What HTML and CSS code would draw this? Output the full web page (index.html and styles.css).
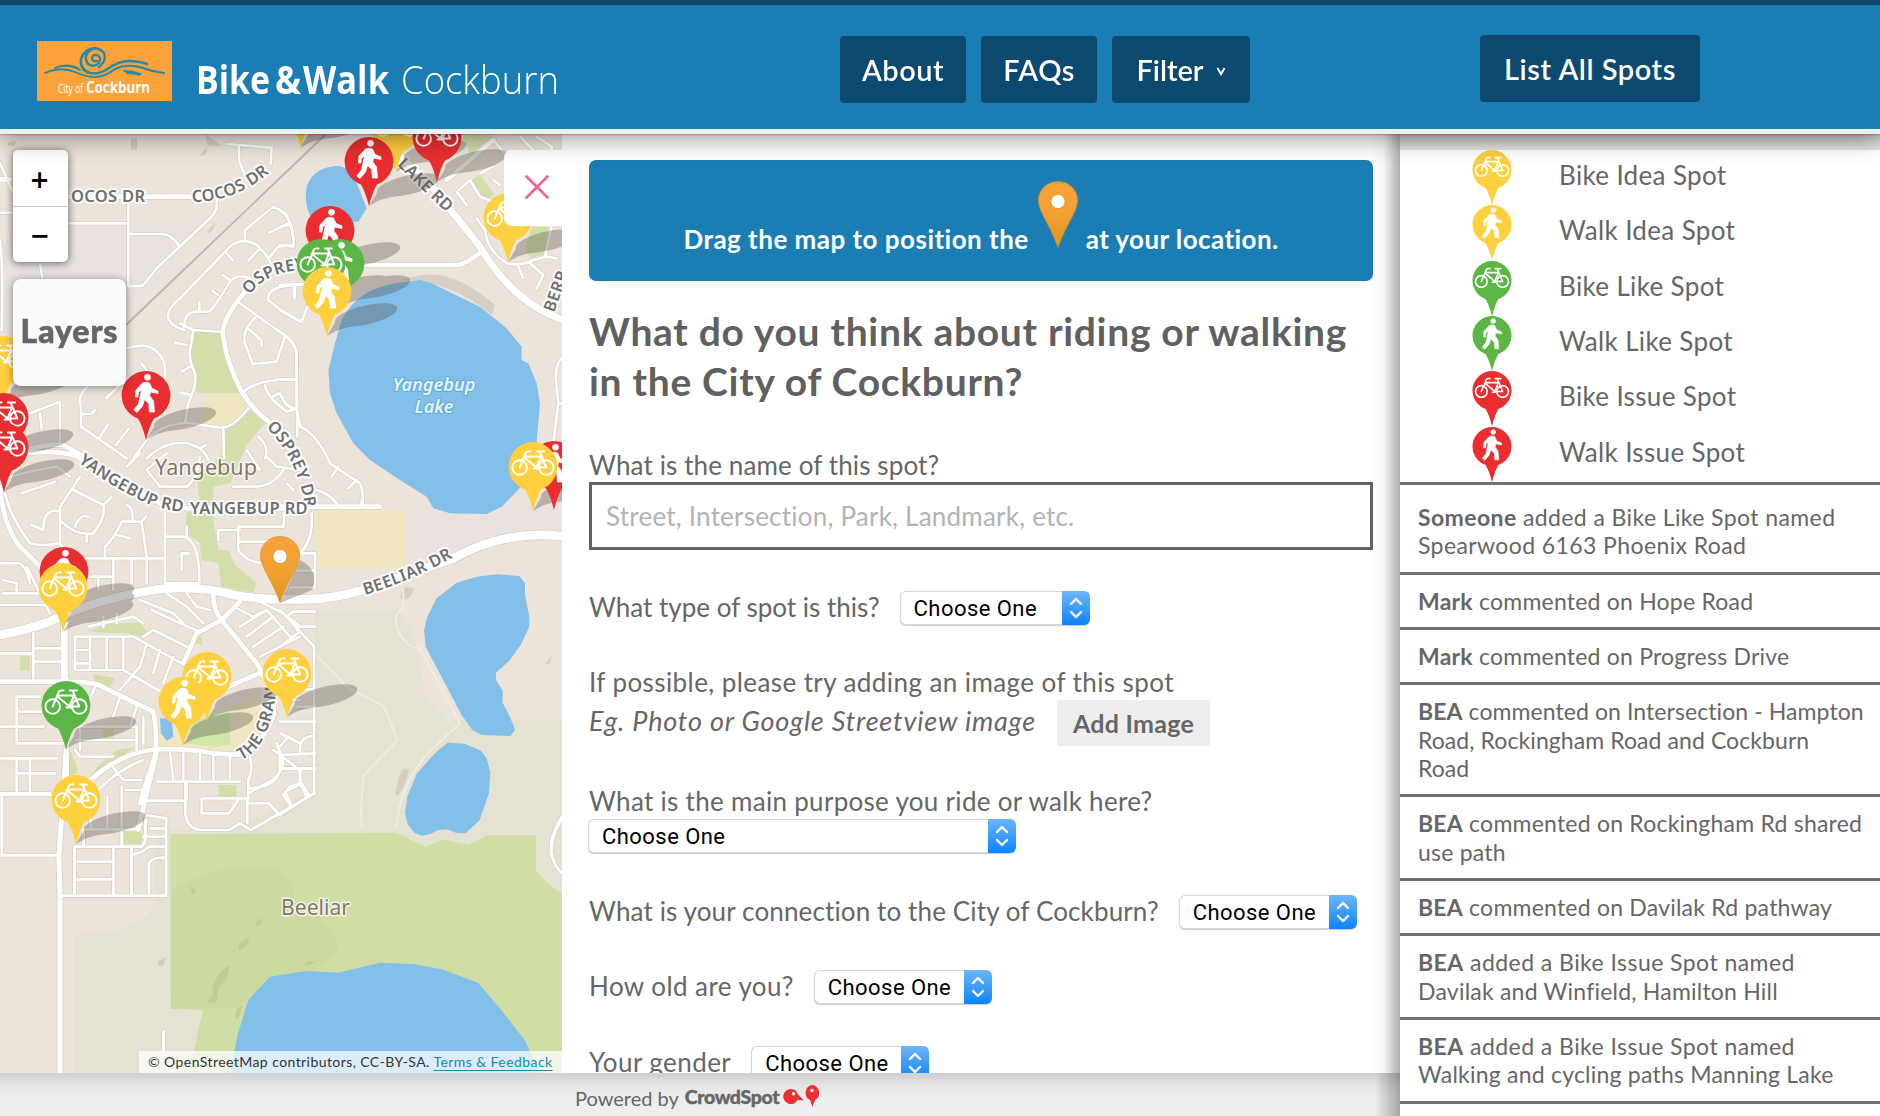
FILE: index.html
```html
<!DOCTYPE html>
<html lang="en">
<head>
<meta charset="utf-8">
<title>Bike&amp;Walk Cockburn</title>
<link rel="stylesheet" href="styles.css">
</head>
<body>
<svg class="defs" width="0" height="0" aria-hidden="true">
  <defs>
    <linearGradient id="orange" x1="0" y1="0" x2="0" y2="1"><stop offset="0" stop-color="#f9a43c"/><stop offset=".5" stop-color="#f3a033"/><stop offset="1" stop-color="#de9420"/></linearGradient>
    <path id="drop" d="M25 0A25 24.5 0 0 1 33 47.5Q28.5 55 25 69Q21.500 55 17 47.500A25 24.500 0 0 1 25 0Z"/>
    <g id="bike" fill="none" stroke="#fff" stroke-width="2" stroke-linecap="round" stroke-linejoin="round">
      <circle cx="11.700" cy="25.500" r="7.300"/><circle cx="38.300" cy="25.500" r="7.300"/>
      <path d="M11.700 25.500L18 10.500Q18.500 9 22.500 9.500M17 14.500H33M16.500 15.500L28.500 25.500L33 14.500M38.300 25.500L32 10.500M29 9.500H36M28.500 25.500H38M25.500 26.500H30"/>
    </g>
    <g id="walker" fill="#fff" stroke="#fff" stroke-width=".8" stroke-linejoin="round">
      <circle cx="26.500" cy="6.300" r="3"/>
      <path d="M21.500 12Q25 10.500 28.500 12L31 17.500L37 20V22.500L29.500 21L28.800 25L32.500 30L33.500 41H28.500L27.800 32.500L23.500 28.500L21.500 35L16 41.500L12.800 39L17.500 33L20.500 19L17.500 21L16.800 26H14.500L15 19Z"/>
    </g>
    <g id="shadow"><ellipse cx="39" cy="-21" rx="32" ry="9.500" transform="rotate(-13 39 -21)"/><path d="M0 0L12 -20L28 -10Q12 -8 0 0Z"/></g>
    <symbol id="spot-bike" viewBox="0 0 50 69"><use href="#drop"/><use href="#bike"/></symbol>
    <symbol id="spot-walk" viewBox="0 0 50 69"><use href="#drop"/><use href="#walker"/></symbol>
    <symbol id="drag-pin" viewBox="0 0 40 67"><path d="M20 .5C31 .5 39.500 9 39.500 19.500C39.500 31 28 43 20 66.500C12 43 .5 31 .5 19.500C.5 9 9 .5 20 .5Z" fill="url(#orange)" stroke="#d98f22" stroke-width=".8"/><circle cx="20" cy="20.500" r="7.200" fill="#fff" stroke="#e0942a"/></symbol>
  </defs>
</svg>

<header class="header">
  <div class="brand">
    <svg class="crest" viewBox="0 0 135 60" role="img" aria-label="City of Cockburn">
      <rect width="135" height="60" fill="#fba33a"/>
      <g fill="none" stroke="#2589a8" stroke-linecap="round">
        <path stroke-width="2.300" d="M60 20Q56 21 55 18Q55 13 60 14Q65 16 62 22Q57 27 51 23Q46 16 52 10Q60 4 67 12Q70 20 62 26"/>
        <path stroke-width="2.600" d="M58 7Q47 8 44 18Q43 29 53 32Q62 34 72 27Q82 20 92 20Q102 20 110 23"/>
        <path stroke-width="2.200" d="M58 36Q68 36 78 28Q90 22 106 27Q116 31 127 32"/>
        <path stroke-width="1.800" d="M8 32Q24 25 38 31Q46 35 56 36M18 27Q30 22 41 27M26 25Q34 24 43 29M87 30Q96 30 104 33M90 32Q98 32 102 34"/>
      </g>
      <text x="21" y="51.500" textLength="25" lengthAdjust="spacingAndGlyphs" class="crest-of">City of</text>
      <text x="49" y="51.500" textLength="64" lengthAdjust="spacingAndGlyphs" class="crest-name">Cockburn</text>
    </svg>
    <svg class="title" viewBox="0 0 370 60">
      <text x="0" y="44" textLength="74" lengthAdjust="spacingAndGlyphs" class="title-bold">Bike</text>
      <text x="79" y="44" textLength="26" lengthAdjust="spacingAndGlyphs" class="title-bold">&amp;</text>
      <text x="107" y="44" textLength="86" lengthAdjust="spacingAndGlyphs" class="title-bold">Walk</text>
      <text x="205" y="44" textLength="158" lengthAdjust="spacingAndGlyphs" class="title-light">Cockburn</text>
    </svg>
  </div>
  <nav class="nav">
    <a class="btn about">About</a>
    <a class="btn faqs">FAQs</a>
    <a class="btn filter">Filter <svg width="10" height="9" viewBox="0 0 10 9"><path d="M1.500 1L5 7L8.500 1" fill="none" stroke="#fff" stroke-width="2"/></svg></a>
  </nav>
  <a class="btn list-all">List All Spots</a>
</header>

<div class="main">
  <div class="left">
    <div class="stage">
      <div class="map">
        <svg class="tiles" viewBox="0 134 562 939" width="562" height="939">
          <defs>
            <path id="p-y1" d="M78 462Q110 486 146 503Q160 510 200 514"/>
            <path id="p-osp" d="M250 295Q265 271 310 269"/>
            <path id="p-osp2" d="M266 427Q310 470 307 548"/>
            <path id="p-cocos" d="M192 202Q240 202 278 165"/>
            <path id="p-bee" d="M365 595Q415 580 466 550"/>
            <path id="p-grange" d="M241 760Q278 745 279 650"/>
            <g id="roads">
              <g transform="translate(0 130) scale(.3333)">
                <path class="r1" d="M680 42L815 53L812 100M716 50L718 95L735 135M650 210V235Q645 250 630 265L470 415L430 465Q425 470 385 468M205 280H385M385 215V470M385 312H490Q515 315 535 345M0 100L40 190M0 248H40M120 400L128 450M0 330Q10 400 5 600M735 328V300L820 230L858 250Q880 300 882 345L835 350L805 385M865 280L808 308M555 600Q500 585 505 550Q510 530 540 505L690 350Q730 320 770 345Q800 370 812 400M680 370L698 390M780 355L745 392M552 590Q555 545 590 545H625Q640 540 690 455Q710 430 750 445M598 545V518M668 435L692 452M636 482L655 495M540 580L580 600L668 606M720 520L860 620Q890 640 890 680L892 920M900 465Q800 465 805 510Q850 550 900 575M885 470V505M768 560Q725 600 735 640L758 702L830 695L855 620M748 598L785 632V648M730 785Q780 745 885 748M795 765Q800 800 860 845L885 838M835 790L815 802M525 638L560 645M545 725L570 710M540 788L575 795M580 600L570 660Q565 690 585 730Q590 770 565 820L555 880M745 835Q700 895 660 893L560 878Q480 885 440 930L400 985M380 655Q440 635 470 665Q500 690 495 740V850M425 700L440 722M262 770Q230 800 243 830V890L380 985M245 852H275L285 840M318 805L360 765M298 925L325 882M348 945L385 897M90 850L180 815V940M120 850L125 895M440 985Q500 930 560 940Q610 950 625 990M600 955L618 945M670 900L672 985M775 920Q810 950 795 985"/>
                <path class="r2" d="M200 200H570Q620 195 650 190M0 148H30M740 480Q670 560 668 610Q680 700 725 785Q760 840 800 870L860 930M80 960Q150 940 190 945L260 985"/>
              </g>
              <g transform="translate(280 130) scale(.3333)">
                <path class="r1" d="M0 345L40 350Q45 300 20 260L0 240M0 290L25 285M560 225L530 185L565 155M640 30L690 90M720 20L760 60M770 20L815 50V80M600 130L640 110M570 150L600 200L640 215M640 150L660 165M590 265L615 300Q620 360 680 400Q720 410 760 390L800 380L830 385M815 290L795 380M715 410L730 445M750 400L790 435L770 475M0 465Q60 460 90 465M42 465V505M0 540L65 575L90 510M0 605Q50 640 50 680V840Q60 880 60 890Q110 910 150 1000L240 1060Q250 1080 248 1125M155 1040L175 1010M205 1075L230 1050M0 748H45M0 790Q20 840 50 835M850 680Q825 700 828 750L835 820L820 940M835 820H850M110 1080Q150 1090 175 1125M20 1060L40 1080"/>
                <path class="r2" d="M250 405H535Q560 400 605 365M500 150L640 30M0 1130H300"/>
                <path class="r3" d="M340 60L440 150L600 350Q700 520 850 570"/>
              </g>
              <g transform="translate(0 450) scale(.3333)">
                <path class="r1" d="M65 130L165 95M30 80Q100 60 170 50L210 80M240 80L180 170V280Q120 290 90 280Q30 200 15 130M180 280L210 325M220 120L310 165Q320 200 280 250Q230 260 185 215M335 140L310 165M265 200Q240 190 225 230M180 185Q130 170 130 240L95 225M260 255V275M315 320V290Q340 270 365 215H425L440 320M430 210L438 200M380 165Q400 170 398 210M350 255L390 265M210 325H495M495 170V400M495 260H550Q600 270 598 400H495M560 260V230M545 360V310H565M0 340H60Q85 360 90 400M10 390L50 400V430H10M50 430H140M0 465H150M80 350L150 490M270 380H340V325M395 325V400M295 380V420M340 380V420M440 330V400M100 550V690M0 610H100M100 595H185M100 635H185M225 560V660M225 560H370M270 565V660M320 565V660M225 600H270M225 640H270M225 660H370M265 530L400 500L430 520M310 500V530M350 490V520M370 660V560H400L545 640M370 660L500 735M440 580L420 650L360 720M480 600L460 670M520 620L490 700M430 560L460 540L560 590M455 480L540 520L600 545M420 450L520 490L560 530M500 430L560 470L610 520M560 430L590 470L630 480M720 530L800 480L870 560M740 560L820 500M760 590L850 530M780 620L900 560M700 470L760 500L800 480M780 455L850 490L900 530M655 270V240H720M715 230H850Q855 200 850 190M715 230V300Q740 340 800 340M715 275H850M50 740H120M50 740V880H200M0 830H130M50 785H125M0 925H170M50 925V1030M90 925V1030M0 1030H150M90 970H165M50 970H90M225 900L240 920H340M240 830V900M225 830H410V900M225 870H410M290 700L260 770M360 740L340 800M410 770L390 830M430 800V880M330 940L370 990H425M270 1050Q330 970 430 930M470 995H720M510 905L520 990M550 900V990M600 910V990M640 915V990M690 920V985M560 1000V1050M750 920Q760 960 745 990V1050M830 880L850 940Q840 980 800 1000L745 1030M440 60L500 10M440 60L480 110H560Q590 90 600 20M700 110H760Q820 110 850 60M740 0L780 60M800 20L830 50L900 60M380 50L420 10M500 750L560 700M840 850L900 880M820 900L900 960M850 750H900"/>
                <path class="r2" d="M0 110Q10 230 60 290L120 350L180 480M80 10Q200 -5 250 30L480 160L560 175H900M0 695H200Q280 695 310 712L460 785Q470 830 468 900M250 1010Q350 910 470 898Q560 895 640 910L720 915M470 900L420 1060M640 435Q640 480 665 510L590 550L550 640M665 510L770 640Q830 740 820 800Q790 880 720 915M665 510L720 455M640 730L800 660M200 690V1050"/>
                <path class="r3" d="M193 520V690"/>
                <path class="r4" d="M0 555Q80 540 150 515Q300 440 500 415Q620 410 700 435Q780 450 900 448Q990 450 1090 420L1360 325Q1520 235 1700 260"/>
              </g>
              <g transform="translate(280 500) scale(.3333)">
                <path class="r1" d="M95 40V80Q90 130 60 160H105V262H30M50 212H105M0 440L60 395M20 350L40 335H105M50 390L60 380H105M30 568H100M50 620H105M0 665H105M0 765L105 760M60 765V740Q65 710 100 708M0 740L25 710M0 805H105M60 805L62 850L30 860L10 885L30 915M62 855L80 890M850 950Q815 1000 815 1050M160 0L175 15M245 0V15"/>
                <path class="r1" d="M0 330L102 440V880L0 945"/>
              </g>
              <g transform="translate(0 750) scale(.3635 .3333)">
                <path class="r1" d="M0 316H165M5 135V316M5 135H140M205 435V290H390Q400 280 400 262V195L457 205V437H170M205 335H310M205 388H310M312 290V435M362 290V435M362 315Q390 310 410 290H455M410 435V340Q415 322 455 322M335 240V285M230 290V238H380M395 260H455M415 235H455M400 152H510M510 97V190Q515 240 560 240H630L660 220L690 240L865 130M555 145H680V220M555 145V190H630L655 150M685 115Q770 110 770 50V0M770 55H865M685 160H740L765 190M800 160L785 125L830 100L850 135M825 60V100M335 110V230M295 140V235M345 120H400M250 210V235M450 845V905M1546 200Q1510 260 1517 310Q1525 350 1546 370"/>
                <path class="r2" d="M165 970V430L162 320L182 0M432 0L380 238"/>
              </g>
            </g>
          </defs>
          <rect y="134" width="562" height="939" fill="#ece4da"/>
          <path fill="#eae2de" d="M30 225H200L120 330H0V240ZM410 505H562V535L410 560Z"/>
          <path fill="#e4e3d3" d="M315 611L400 611Q420 640 425 700L445 720H562V1073H75V935Q150 930 155 900V830H230L315 790Z"/>
          <g fill="#d4deab">
            <path transform="translate(0 130) scale(.3333)" d="M583 603L663 610Q668 690 718 790L590 788L590 745L567 690ZM672 905L750 840L795 880L740 945L715 990H672Z"/>
            <path transform="translate(280 130) scale(.3333)" d="M545 10H650L570 75ZM565 155L600 135L640 190L620 215ZM755 290H805L795 370L755 385L735 360Z"/>
            <path transform="translate(0 450) scale(.3333)" d="M680 0H735L690 100L640 110V210L655 300H685L705 345L770 400L760 428L665 410L655 340L605 330L600 280L558 250L560 190L600 160L590 85ZM262 545L330 520L420 518L445 550L430 562L380 550ZM280 672L345 685L330 710L280 690ZM585 580L600 548L608 585ZM60 618H90V662H60ZM210 900L235 960L205 990ZM290 950L350 900L410 890L330 940L270 985ZM655 1005H710V1050H655ZM310 830H340V865H310Z"/>
            <path transform="translate(0 750) scale(.3635 .3333)" d="M340 240H385L395 262L385 282H340Z"/>
          </g>
          <g fill="#f0e6c1">
            <path transform="translate(0 130) scale(.3333)" d="M620 790H718L748 832L690 893L600 885Z"/>
            <path d="M315 510H406V569H315Z"/>
            <path transform="translate(0 450) scale(.3333)" d="M560 830L790 720Q830 830 700 905L470 895V850Z"/>
          </g>
          <path fill="#cfe7a8" transform="translate(0 450) scale(.3333)" d="M570 815L690 780V885L640 890L560 880Z"/>
          <g transform="translate(0 750) scale(.3635 .3333)">
            <path fill="#d0dda4" d="M468 252L1090 248L1170 290L1220 268L1290 285L1340 256H1474V360Q1500 400 1546 430V970H520L558 780L470 776Z"/>
            <path fill="#cbdb9f" d="M470 420Q600 340 740 350Q810 370 810 450Q930 520 930 600Q880 680 740 680Q680 760 640 776L470 776Z"/>
            <path fill="#bfcd96" d="M632 645Q580 680 585 735L568 755Q590 770 600 745V715Q630 690 632 645ZM680 565Q650 580 657 600Q685 590 685 570ZM720 505Q700 515 703 530Q725 525 720 505ZM670 765Q640 780 650 805Q662 800 662 780ZM525 412H537V430L527 432ZM835 645L850 633L868 636L850 646Z"/>
          </g>
          <g fill="#bdb6ab" opacity=".45">
            <path d="M205 134L222 146H208ZM131 138H137V150H131ZM200 155L207 147V152L203 156ZM207 231L216 222L213 230L209 233ZM8 142L16 141L14 146H8ZM405 587L414 588Q411 600 402 600Q398 596 405 587ZM403 769L409 770Q406 785 398 796Q394 795 396 790Q398 777 403 769ZM546 663L552 655L550 663L547 665ZM158 961L166 957L163 966H158ZM422 275Q455 270 495 305L492 315Q450 280 400 280Z"/>
          </g>
          <g fill="#82bfe9">
            <path transform="translate(280 130) scale(.3333)" d="M345 460L420 450L455 460L600 530L680 595L725 650V690L745 700L770 760L780 820L770 940Q760 1040 700 1095L665 1130L620 1152L510 1150L460 1135L440 1100L360 1050L270 990L220 940L170 850L150 790L145 720L165 640L185 570Q230 480 345 460ZM80 170Q100 110 175 108Q220 115 230 160L260 235L235 275H100Q70 230 80 170Z"/>
            <path transform="translate(280 500) scale(.3333)" d="M470 295L530 248L590 230L650 223L718 228L735 250V285L748 350V380L722 435L690 480L648 518V540L668 572V608L690 650L705 690L692 708L605 705L577 690L545 645L437 440L432 390L442 350ZM503 728L555 731L603 752L620 775L631 818L627 880L598 962L556 1000L528 998L500 988L475 990L450 1003L425 1007L403 998L382 970L375 940L382 890L410 822L465 760Z"/>
            <path transform="translate(0 750) scale(.3635 .3333)" d="M632 970L655 850L683 750L743 680L840 663L930 668L1045 638L1140 643L1215 658L1315 698L1375 775L1445 872L1482 970Z"/>
            <path transform="translate(0 450) scale(.3333)" d="M480 805H515L520 860L500 872L483 850Z"/>
          </g>
          <g class="trails" transform="translate(280 500) scale(.3333)"><path d="M105 460L200 560L312 620L352 720L252 825Q240 900 245 980M370 265V325Q340 340 350 380Q370 440 420 445L540 670L450 755Q360 850 350 980"/></g>
          <path d="M126 325L325 135" stroke="#b9b5b0" stroke-width="1.800" fill="none"/>
          <use href="#roads" class="casing"/>
          <use href="#roads" class="surface"/>
          <g class="street">
            <text x="71" y="202">OCOS DR</text>
            <text><textPath href="#p-cocos">COCOS DR</textPath></text>
            <text><textPath href="#p-osp">OSPREY</textPath></text>
            <text><textPath href="#p-osp2">OSPREY DR</textPath></text>
            <text><textPath href="#p-y1">YANGEBUP RD</textPath></text>
            <text x="190" y="514">YANGEBUP RD</text>
            <text><textPath href="#p-bee">BEELIAR DR</textPath></text>
            <text><textPath href="#p-grange">THE GRANGE</textPath></text>
            <text transform="translate(397 165) rotate(44)">LAKE RD</text>
            <text transform="translate(554 313) rotate(-70)">BERR</text>
          </g>
          <g class="place"><text x="155" y="475" textLength="102" lengthAdjust="spacingAndGlyphs">Yangebup</text><text x="281" y="915" textLength="69" lengthAdjust="spacingAndGlyphs">Beeliar</text></g>
          <g class="water"><text x="434" y="391" textLength="83" lengthAdjust="spacingAndGlyphs">Yangebup</text><text x="434" y="413" textLength="39" lengthAdjust="spacingAndGlyphs">Lake</text></g>
          <g fill="#5a554f" opacity=".36">
            <use href="#shadow" x="146" y="440"/><use href="#shadow" x="3" y="405"/><use href="#shadow" x="3" y="462"/><use href="#shadow" x="4" y="492"/>
            <use href="#shadow" x="300" y="148"/><use href="#shadow" x="396" y="172"/><use href="#shadow" x="437" y="182"/><use href="#shadow" x="369" y="206"/>
            <use href="#shadow" x="330" y="275"/><use href="#shadow" x="340" y="308"/><use href="#shadow" x="320" y="308"/><use href="#shadow" x="327" y="336"/>
            <use href="#shadow" x="508" y="262"/><use href="#shadow" x="533" y="511"/>
            <use href="#shadow" x="64" y="616"/><use href="#shadow" x="64" y="624"/><use href="#shadow" x="63" y="632"/><use href="#shadow" x="66" y="749"/>
            <use href="#shadow" x="207" y="720"/><use href="#shadow" x="183" y="745"/><use href="#shadow" x="287" y="717"/><use href="#shadow" x="76" y="844"/>
            <path d="M280 603L300 560Q320 570 312 590Z"/>
          </g>
          <g class="spots">
            <use class="idea" href="#spot-bike" x="276" y="79" width="50" height="69"/>
            <use class="idea" href="#spot-bike" x="371" y="103" width="50" height="69"/>
            <use class="issue" href="#spot-bike" x="412" y="113" width="50" height="69"/>
            <use class="issue" href="#spot-walk" x="344" y="137" width="50" height="69"/>
            <use class="issue" href="#spot-walk" x="305" y="206" width="50" height="69"/>
            <use class="like" href="#spot-walk" x="315" y="239" width="50" height="69"/>
            <use class="like" href="#spot-bike" x="296" y="239" width="50" height="69"/>
            <use class="idea" href="#spot-walk" x="302" y="267" width="50" height="69"/>
            <use class="idea" href="#spot-bike" x="483" y="193" width="50" height="69"/>
            <use class="idea" href="#spot-bike" x="-22" y="336" width="50" height="69"/>
            <use class="issue" href="#spot-walk" x="121" y="371" width="50" height="69"/>
            <use class="issue" href="#spot-bike" x="-21" y="393" width="50" height="69"/>
            <use class="issue" href="#spot-bike" x="-21" y="423" width="50" height="69"/>
            <use class="issue" href="#spot-walk" x="529" y="441" width="50" height="69"/>
            <use class="idea" href="#spot-bike" x="508" y="442" width="50" height="69"/>
            <use class="issue" href="#spot-walk" x="39" y="547" width="50" height="69"/>
            <use class="idea" href="#spot-bike" x="38" y="563" width="50" height="69"/>
            <use class="like" href="#spot-bike" x="41" y="681" width="50" height="69"/>
            <use class="idea" href="#spot-bike" x="182" y="652" width="50" height="69"/>
            <use class="idea" href="#spot-walk" x="158" y="677" width="50" height="69"/>
            <use class="idea" href="#spot-bike" x="262" y="649" width="50" height="69"/>
            <use class="idea" href="#spot-bike" x="51" y="775" width="50" height="69"/>
            <use href="#drag-pin" x="260" y="536" width="40" height="67"/>
          </g>
        </svg>
        <div class="zoom"><a>+</a><a>−</a></div>
        <div class="layers">Layers</div>
        <div class="attribution"><span class="copy">©</span> OpenStreetMap contributors, CC-BY-SA. <a>Terms &amp; Feedback</a></div>
        <a class="close" aria-label="Close"><svg width="24" height="24" viewBox="0 0 24 24"><path d="M1.500 1.500L22.500 22.500M22.500 1.500L1.500 22.500" stroke="#f0619a" stroke-width="2.600" stroke-linecap="round"/></svg></a>
      </div>
      <form class="form">
        <div class="banner"><span class="drag-text">Drag the map to position the</span><svg width="42" height="68"><use href="#drag-pin" width="42" height="67"/></svg><span class="loc-text">at your location.</span></div>
        <h1>What do you think about riding or walking<br>in the City of Cockburn?</h1>
        <label class="stacked name-label">What is the name of this spot?</label>
        <input type="text" placeholder="Street, Intersection, Park, Landmark, etc.">
        <div class="row type-row"><label>What type of spot is this?</label><span class="select w190"><select><option>Choose One</option></select><svg width="28" height="34" viewBox="0 0 28 34"><path d="M9 13L14 8L19 13M9 21L14 26L19 21"/></svg></span></div>
        <label class="stacked image-label">If possible, please try adding an image of this spot</label>
        <div class="image-row"><em>Eg. Photo or Google Streetview image</em><button type="button">Add Image</button></div>
        <label class="stacked purpose-label">What is the main purpose you ride or walk here?</label>
        <span class="select w428"><select><option>Choose One</option></select><svg width="28" height="34" viewBox="0 0 28 34"><path d="M9 13L14 8L19 13M9 21L14 26L19 21"/></svg></span>
        <div class="row connection-row"><label>What is your connection to the City of Cockburn?</label><span class="select"><select><option>Choose One</option></select><svg width="28" height="34" viewBox="0 0 28 34"><path d="M9 13L14 8L19 13M9 21L14 26L19 21"/></svg></span></div>
        <div class="row short-row"><label>How old are you?</label><span class="select"><select><option>Choose One</option></select><svg width="28" height="34" viewBox="0 0 28 34"><path d="M9 13L14 8L19 13M9 21L14 26L19 21"/></svg></span></div>
        <div class="row short-row"><label>Your gender</label><span class="select"><select><option>Choose One</option></select><svg width="28" height="34" viewBox="0 0 28 34"><path d="M9 13L14 8L19 13M9 21L14 26L19 21"/></svg></span></div>
      </form>
    </div>
    <footer class="footer"><span>Powered by</span><b>CrowdSpot</b>
      <svg width="38" height="24" viewBox="0 0 38 24"><g fill="#ee3035"><path d="M8 4A7.500 7.500 0 0 1 15 9.500L21 15.500L14.500 14.800A7.500 7.500 0 1 1 8 4Z"/><path d="M29 0A8 8 0 0 1 32 15L29.500 22L27 15A8 8 0 0 1 29 0Z"/></g><circle cx="10.500" cy="8.700" r="1.700" fill="#fff"/><circle cx="29" cy="5.500" r="1.700" fill="#fff"/></svg>
    </footer>
  </div>
  <aside class="sidebar">
    <ul class="legend">
      <li><svg class="idea"><use href="#spot-bike"/></svg>Bike Idea Spot</li>
      <li><svg class="idea"><use href="#spot-walk"/></svg>Walk Idea Spot</li>
      <li><svg class="like"><use href="#spot-bike"/></svg>Bike Like Spot</li>
      <li><svg class="like"><use href="#spot-walk"/></svg>Walk Like Spot</li>
      <li><svg class="issue"><use href="#spot-bike"/></svg>Bike Issue Spot</li>
      <li><svg class="issue"><use href="#spot-walk"/></svg>Walk Issue Spot</li>
    </ul>
    <ul class="feed">
      <li><b>Someone</b> added a Bike Like Spot named<br>Spearwood 6163 Phoenix Road</li>
      <li><b>Mark</b> commented on Hope Road</li>
      <li><b>Mark</b> commented on Progress Drive</li>
      <li class="tight"><b>BEA</b> commented on Intersection - Hampton<br>Road, Rockingham Road and Cockburn<br>Road</li>
      <li><b>BEA</b> commented on Rockingham Rd shared<br>use path</li>
      <li><b>BEA</b> commented on Davilak Rd pathway</li>
      <li class="loose"><b>BEA</b> added a Bike Issue Spot named<br><span>Davilak and Winfield, Hamilton Hill</span></li>
      <li class="loose"><b>BEA</b> added a Bike Issue Spot named<br><span>Walking and cycling paths Manning Lake</span></li>
      <li></li>
    </ul>
  </aside>
</div>
</body>
</html>
```
FILE: styles.css
```css
* { box-sizing: border-box; }
body {
  margin: 0;
  width: 1880px;
  height: 1116px;
  overflow: hidden;
  display: flex;
  flex-direction: column;
  background: #fff;
  font-family: Lato, "Liberation Sans", sans-serif;
  color: #666;
}
.defs { position: absolute; }
ul { margin: 0; padding: 0; list-style: none; }

/* Header */
.header {
  position: relative;
  z-index: 3;
  flex: none;
  height: 134px;
  display: grid;
  grid-template-columns: 840px 640px 1fr;
  align-items: start;
  background: #1a7db4;
  border-top: 5px solid #0b4a6e;
  border-bottom: 5px solid #efefef;
  box-shadow: 0 1px 1px rgba(0, 0, 0, .2), 0 3px 24px rgba(0, 0, 0, .45);
}
.brand { display: flex; padding: 36px 0 0 37px; }
.crest { width: 135px; height: 60px; }
.title { width: 370px; height: 60px; margin: 9px 0 0 24px; overflow: visible; }
.crest text, .title text { fill: #fff; font-family: "Open Sans", sans-serif; }
.crest-of { font-size: 12px; }
.crest-name { font-size: 16px; font-weight: 700; }
.title-bold { font-size: 38.500px; font-weight: 700; }
.title-light { font-size: 38.500px; font-weight: 300; }
.nav { display: flex; gap: 15px; padding-top: 31px; }
.btn {
  display: flex;
  align-items: center;
  justify-content: center;
  height: 67px;
  padding-bottom: 1px;
  border-radius: 4px;
  background: #0b4a6e;
  color: #fff;
  font-size: 29px;
  font-weight: 600;
  letter-spacing: .45px;
}
.about { width: 126px; }
.faqs { width: 116px; }
.filter { width: 138px; letter-spacing: 0; }
.filter svg { margin: 5px 0 0 12px; }
.list-all { width: 220px; margin-top: 30px; letter-spacing: .55px; }

/* Columns */
.main { flex: 1; display: flex; min-height: 0; }
.left { width: 1400px; display: flex; flex-direction: column; }
.stage { flex: 1; min-height: 0; display: flex; overflow: hidden; }

/* Map */
.map { position: relative; width: 562px; height: 939px; overflow: hidden; }
.tiles { display: block; }
.casing { --c: 4px; fill: none; stroke: #d5cec5; stroke-linecap: round; stroke-linejoin: round; }
.surface { --c: 0px; fill: none; stroke: #fff; stroke-linecap: round; stroke-linejoin: round; }
.r1 { stroke-width: calc(8px + var(--c)); }
.r2 { stroke-width: calc(14px + var(--c)); }
.r3 { stroke-width: calc(21px + var(--c)); }
.r4 { stroke-width: calc(26px + var(--c)); }
.trails { fill: none; stroke: #f1ecdf; stroke-width: 6; }
.tiles text { font-family: "Noto Sans", sans-serif; paint-order: stroke; stroke-linejoin: round; }
.street text { font-size: 16.500px; font-weight: 600; letter-spacing: .3px; fill: #6d6e70; stroke: rgba(255, 255, 255, .85); stroke-width: 4px; }
.place text { font-size: 22px; fill: #85766b; stroke: rgba(255, 255, 255, .75); stroke-width: 3px; }
.water text { font-size: 18px; font-style: italic; font-weight: 600; text-anchor: middle; fill: #e3f2fc; stroke: #63aadb; stroke-width: 2px; }
.idea { fill: #fed03d; }
.like { fill: #5cb645; }
.issue { fill: #e92e31; }
.zoom, .layers, .attribution, .close { position: absolute; }
.zoom {
  left: 13px;
  top: 16px;
  width: 55px;
  height: 112px;
  border-radius: 5px;
  background: #fff;
  box-shadow: 0 1px 8px rgba(0, 0, 0, .6);
}
.zoom a { display: block; height: 56px; padding-right: 2px; font: 700 24px/60px "DejaVu Sans", sans-serif; text-align: center; color: #000; }
.zoom a + a { border-top: 1px solid #ccc; line-height: 58px; }
.layers {
  left: 13px;
  top: 145px;
  width: 113px;
  height: 107px;
  border-radius: 8px;
  background: #fafafa;
  box-shadow: 0 1px 8px rgba(0, 0, 0, .45);
  font-size: 32px;
  font-weight: 900;
  line-height: 103px;
  letter-spacing: .9px;
  text-align: center;
  -webkit-text-stroke: .6px #666;
}
.attribution {
  right: 0;
  bottom: 0;
  width: 423px;
  height: 22px;
  padding-left: 9px;
  background: rgba(255, 255, 255, .72);
  font-size: 14px;
  line-height: 21px;
  letter-spacing: .43px;
  white-space: nowrap;
  color: #333;
}
.attribution a { color: #1f86b5; text-decoration: underline; text-underline-offset: 3px; }
.close {
  right: 0;
  top: 16px;
  width: 58px;
  height: 76px;
  display: grid;
  place-items: center;
  padding: 0 0 3px 8px;
  border-radius: 8px 0 0 8px;
  background: #fff;
}

/* Form */
.form { width: 838px; padding: 26px 27px 0 27px; font-size: 26px; letter-spacing: .2px; white-space: nowrap; background: linear-gradient(to right, rgba(0,0,0,0) 810px, rgba(0,0,0,.04) 822px, rgba(0,0,0,.32) 838px); }
.banner {
  display: flex;
  justify-content: center;
  height: 121px;
  padding-top: 21px;
  border-radius: 7px;
  background: #1a7db4;
  color: #fff;
  font-size: 26px;
  font-weight: 700;
  line-height: 117px;
}
.banner span { height: 100px; }
.drag-text { letter-spacing: .48px; }
.loc-text { letter-spacing: .42px; }
.banner svg { margin: 0 7px 0 8px; }
h1 { margin: 24.500px 0 0; font-size: 39px; line-height: 50px; letter-spacing: .700px; color: #606060; }
label.stacked { display: block; line-height: 36px; }
.name-label { margin-top: 41px; letter-spacing: .12px; }
.image-label { margin-top: 39px; letter-spacing: .42px; }
.purpose-label { margin-top: 37px; letter-spacing: .3px; }
input {
  display: block;
  width: 784px;
  height: 68px;
  margin-top: -.5px;
  padding: 0 0 1px 14px;
  border: 3px solid #606263;
  background: transparent;
  font: 26px Lato, sans-serif;
  letter-spacing: .22px;
}
input::placeholder { color: #b3b3b3; opacity: 1; }
.row { display: flex; align-items: flex-start; gap: 20px; height: 34px; margin-top: 41.500px; line-height: 32px; }
.type-row { letter-spacing: 0; }
input + .row { margin-top: 40.500px; }
.connection-row { letter-spacing: .13px; }
.short-row { letter-spacing: .43px; }
.image-row { display: flex; gap: 20px; margin-top: .5px; line-height: 42px; }
.image-row em { width: 448px; font-size: 27px; letter-spacing: .82px; }
.image-row button {
  width: 153px;
  height: 46px;
  padding: 0;
  border: 0;
  border-radius: 3px;
  background: #eee;
  color: #666;
  font: 700 25px Lato, sans-serif;
  letter-spacing: .25px;
}
.select {
  display: flex;
  width: 178px;
  height: 34px;
  border-radius: 6px;
  border: 1px solid #d6d6d6;
  border-right: 0;
  background: #fff;
  box-shadow: 0 1px 1px rgba(0, 0, 0, .2);
}
.w190 { width: 190px; }
.w428 { width: 428px; margin-left: -1px; }
.select select {
  flex: 1;
  min-width: 0;
  height: 33px;
  padding: 0 0 0 13px;
  border: 0;
  background: transparent;
  appearance: none;
  font: 22px Roboto, sans-serif;
  letter-spacing: .45px;
  color: #000;
}
.select svg {
  flex: none;
  margin: -1px 0;
  border-radius: 0 6px 6px 0;
  background: linear-gradient(#6db6fb, #0b84ff);
  fill: none;
  stroke: #fff;
  stroke-width: 2.400;
  stroke-linecap: round;
  stroke-linejoin: round;
}

/* Footer */
.footer {
  position: relative;
  flex: none;
  display: flex;
  height: 43px;
  padding: 8px 0 0 575px;
  background: linear-gradient(to right, rgba(0,0,0,0) 1375px, rgba(0,0,0,.3) 1400px), linear-gradient(#cfcfcf, #e6e6e6 14px, #eee 26px);
  font-size: 20px;
  line-height: 34px;
}
.footer b { margin-left: 6px; font-size: 19.500px; font-weight: 900; line-height: 32px; letter-spacing: -.4px; -webkit-text-stroke: .4px #666; }
.footer svg { margin: 4px 0 0 4px; }

/* Sidebar */
.sidebar { width: 480px; padding-top: 16px; background: linear-gradient(#c8c8c8, #e4e4e4 16px, #fff 16px); }
.legend { height: 332px; display: flex; flex-direction: column; }
.legend li { flex: 1; display: flex; padding-left: 72px; font-size: 26px; line-height: 50px; letter-spacing: .35px; }
.legend svg { width: 40px; height: 55.300px; margin-right: 47px; }
.feed li {
  padding: 12px 0 12px 18px;
  border-top: 3px solid #707070;
  font-size: 23px;
  line-height: 28.330px;
  letter-spacing: .22px;
  white-space: nowrap;
}
.feed li:first-child { padding-top: 18px; letter-spacing: .4px; }
.feed .tight { letter-spacing: .08px; }
.feed .loose { letter-spacing: .45px; }
.feed .loose span { letter-spacing: .22px; }
```
